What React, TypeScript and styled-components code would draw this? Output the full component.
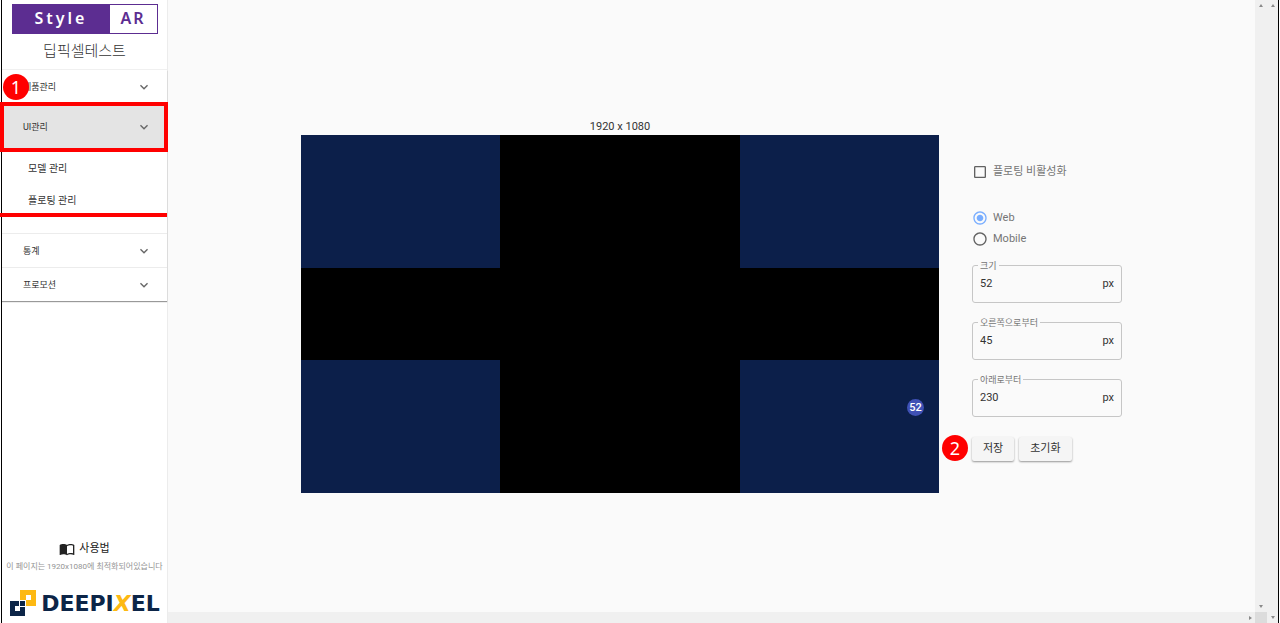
import React, { useState } from "react";
import styled, { createGlobalStyle, css } from "styled-components";
import {
  MdCheckBox,
  MdCheckBoxOutlineBlank,
  MdExpandMore,
  MdImportContacts,
  MdRadioButtonChecked,
  MdRadioButtonUnchecked,
} from "react-icons/md";

const GlobalStyle = createGlobalStyle`
  *, *::before, *::after { box-sizing: border-box; }
  body {
    margin: 0;
    background: #fff;
    color: #333;
    font-family: Roboto, "Noto Sans CJK KR", sans-serif;
    font-size: 11px;
    line-height: 16px;
  }
  button, input { font: inherit; color: inherit; }
`;

const Frame = styled.div`
  display: flex;
  min-height: 100vh;
  margin: 0 1px;
  border-left: 1px solid #000;
  border-right: 1px solid #000;
`;

const Sidebar = styled.aside`
  display: flex;
  flex-direction: column;
  flex: 0 0 166px;
  border-right: 1px solid #ececec;
  background: #fff;
`;

const Brand = styled.header`
  display: flex;
  flex-direction: column;
  align-items: center;
  height: 70px;
  padding-top: 4px;
  border-bottom: 1px solid #f0f0f0;
`;

const StyleLogo = styled.div`
  display: flex;
  width: 146px;
  height: 30px;
  border: 1px solid #5c2d91;
  font-family: "Noto Sans", sans-serif;
  font-size: 16px;
  font-weight: 600;
  line-height: 27px;
  text-align: center;
`;

const LogoStyle = styled.span`
  flex: 0 0 97px;
  background: #5c2d91;
  color: #fff;
  letter-spacing: 3px;
`;

const LogoAr = styled.span`
  flex: 1;
  color: #5c2d91;
  letter-spacing: 2px;
`;

const AccountName = styled.div`
  margin-top: 6px;
  font-size: 15px;
  line-height: 22px;
  font-weight: 300;
`;

const Menu = styled.nav`
  position: relative;
  box-shadow: 0 1px 1px rgba(0, 0, 0, 0.4);
`;

const MenuSection = styled.div`
  position: relative;
  & + & { border-top: 1px solid #ececec; }
`;

const MenuButton = styled.button<{ $active?: boolean }>`
  display: flex;
  align-items: center;
  justify-content: space-between;
  width: 100%;
  height: ${(p) => (p.$active ? "45px" : "33px")};
  padding: 0 15px 0 21px;
  border: 0;
  background: ${(p) => (p.$active ? "#e4e4e4" : "#fff")};
  font-size: 9px;
  cursor: pointer;
  svg { width: 16px; height: 16px; color: #666; }
`;

const SubMenu = styled.div`
  display: flex;
  flex-direction: column;
  padding: 4px 0 16px;
`;

const SubLink = styled.a`
  height: 32px;
  padding-left: 26px;
  color: #333;
  font-size: 10px;
  line-height: 32px;
  text-decoration: none;
`;

const HighlightBox = styled.div`
  position: absolute;
  top: -2px;
  left: -2px;
  right: -1px;
  height: 50px;
  border: 4px solid #f00;
  pointer-events: none;
`;

const HighlightLine = styled.div`
  position: absolute;
  bottom: 16px;
  left: -2px;
  right: 0;
  height: 4px;
  background: #f00;
`;

const StepBadge = styled.span<{ $place: "menu" | "actions" }>`
  position: absolute;
  z-index: 1;
  width: 26px;
  height: 26px;
  border-radius: 50%;
  background: #f00;
  color: #fff;
  font-family: "Noto Sans", sans-serif;
  font-size: 18px;
  line-height: 26px;
  text-align: center;
  ${(p) =>
    p.$place === "menu"
      ? css`top: 4px; left: 1px;`
      : css`top: -2px; left: -30px;`}
`;

const SideFooter = styled.footer`
  display: flex;
  flex-direction: column;
  align-items: center;
  margin-top: auto;
  padding-bottom: 6px;
`;

const GuideLink = styled.a`
  display: flex;
  align-items: center;
  gap: 4px;
  color: #222;
  text-decoration: none;
  svg { width: 16px; height: 16px; }
`;

const Notice = styled.p`
  margin: 3px 0 0;
  color: #949494;
  font-size: 8px;
  line-height: 14px;
  white-space: nowrap;
`;

const Company = styled.div`
  display: flex;
  align-items: flex-end;
  gap: 4px;
  margin-top: 15px;
  color: #0c2547;
  font-family: "DejaVu Sans", sans-serif;
  font-size: 22px;
  font-weight: 700;
  line-height: 26px;
  svg { flex: none; }
  em { color: #fdb913; }
`;

const Main = styled.main`
  display: flex;
  flex: 1;
  flex-direction: column;
  min-width: 0;
  background: #fafafa;
`;

const Workspace = styled.div`
  display: flex;
  flex: 1;
  align-items: center;
  justify-content: center;
  padding: 24px;
`;

const Editor = styled.div`
  display: flex;
  align-items: flex-start;
  gap: 33px;
  flex: 0 1 821px;
`;

const Preview = styled.figure`
  flex: 1;
  margin: 0;
`;

const Resolution = styled.figcaption`
  text-align: center;
`;

const Screen = styled.div`
  position: relative;
  display: grid;
  grid-template-columns: 199fr 240fr 199fr;
  grid-template-rows: 133fr 93fr 133fr;
  aspect-ratio: 16 / 9;
  background: #000;
`;

const Zone = styled.div<{ $open: boolean }>`
  background: ${(p) => (p.$open ? "#0c1f4a" : "#000")};
`;

const FloatingDot = styled.div`
  position: absolute;
  display: flex;
  align-items: center;
  justify-content: center;
  border-radius: 50%;
  background: #3f51b5;
  color: #fff;
  font-weight: 500;
`;

const Controls = styled.form`
  flex: none;
  width: 150px;
  padding-top: 43px;
`;

const Choices = styled.div`
  margin: 25px 0 15px;
`;

const Choice = styled.label`
  position: relative;
  display: flex;
  align-items: center;
  gap: 5px;
  height: 21px;
  color: #757575;
  cursor: pointer;
  input {
    position: absolute;
    width: 16px;
    height: 16px;
    margin: 0;
    opacity: 0;
  }
  svg { width: 16px; height: 16px; color: #616161; }
  input:checked + svg { color: #78adff; }
`;

const Fields = styled.div`
  display: flex;
  flex-direction: column;
  gap: 19px;
`;

const Field = styled.div`
  position: relative;
  display: flex;
  align-items: center;
  height: 38px;
  padding: 0 7px;
  border: 1px solid #c6c6c6;
  border-radius: 3px;
  label {
    position: absolute;
    top: -7px;
    left: 5px;
    padding: 0 2px;
    background: #fafafa;
    color: #757575;
    font-size: 9px;
    line-height: 14px;
  }
  input {
    flex: 1;
    min-width: 0;
    padding: 0;
    border: 0;
    outline: 0;
    background: transparent;
  }
`;

const Actions = styled.div`
  position: relative;
  display: flex;
  gap: 5px;
  margin-top: 20px;
`;

const ActionButton = styled.button`
  height: 24px;
  padding: 0 11px;
  border: 0;
  border-radius: 2px;
  background: #f5f5f5;
  box-shadow: 0 1px 2px rgba(0, 0, 0, 0.4);
  white-space: nowrap;
  cursor: pointer;
`;

const BottomTrack = styled.div`
  display: flex;
  align-items: center;
  justify-content: flex-end;
  height: 11px;
  padding-right: 3px;
  background: #f0f0f0;
`;

const SideTrack = styled.div`
  display: flex;
  flex: 0 0 11px;
  flex-direction: column;
  align-items: center;
  justify-content: space-between;
  padding: 4px 0;
  background: #f0f0f0;
`;

const InnerTrack = styled.div`
  display: flex;
  flex: 0 0 12px;
  flex-direction: column;
`;

const InnerRail = styled(SideTrack)`
  flex: 1;
`;

const Corner = styled.div`
  height: 11px;
  background: #dcdcdc;
`;

const Arrow = styled.i<{ $dir: "up" | "down" | "right" }>`
  width: 0;
  height: 0;
  border: 2px solid transparent;
  ${(p) => p.$dir === "up" && css`border-top: 0; border-bottom: 3px solid #8a8a8a;`}
  ${(p) => p.$dir === "down" && css`border-bottom: 0; border-top: 3px solid #8a8a8a;`}
  ${(p) => p.$dir === "right" && css`border-right: 0; border-left: 3px solid #8a8a8a;`}
`;

const PREVIEW_SCALE = 3;
const OPEN_ZONES = [0, 2, 6, 8];
const DEFAULTS = { size: "52", right: "45", bottom: "230" };
const FIELDS: { key: keyof typeof DEFAULTS; label: string }[] = [
  { key: "size", label: "크기" },
  { key: "right", label: "오른쪽으로부터" },
  { key: "bottom", label: "아래로부터" },
];

const scaled = (value: string) => Math.round((Number(value) || 0) / PREVIEW_SCALE);

export default function App() {
  const [values, setValues] = useState(DEFAULTS);
  const [disabled, setDisabled] = useState(false);
  const [device, setDevice] = useState("Web");

  return (
    <>
      <GlobalStyle />
      <Frame>
        <Sidebar>
          <Brand>
            <StyleLogo>
              <LogoStyle>Style</LogoStyle>
              <LogoAr>AR</LogoAr>
            </StyleLogo>
            <AccountName>딥픽셀테스트</AccountName>
          </Brand>
          <Menu>
            <MenuSection>
              <MenuButton type="button">제품관리<MdExpandMore /></MenuButton>
              <StepBadge $place="menu">1</StepBadge>
            </MenuSection>
            <MenuSection>
              <MenuButton type="button" $active>UI관리<MdExpandMore /></MenuButton>
              <SubMenu>
                <SubLink href="#model">모델 관리</SubLink>
                <SubLink href="#floating">플로팅 관리</SubLink>
              </SubMenu>
              <HighlightBox />
              <HighlightLine />
            </MenuSection>
            <MenuSection>
              <MenuButton type="button">통계<MdExpandMore /></MenuButton>
            </MenuSection>
            <MenuSection>
              <MenuButton type="button">프로모션<MdExpandMore /></MenuButton>
            </MenuSection>
          </Menu>
          <SideFooter>
            <GuideLink href="#guide"><MdImportContacts />사용법</GuideLink>
            <Notice>이 페이지는 1920x1080에 최적화되어있습니다</Notice>
            <Company>
              <svg width="28" height="28" viewBox="0 0 28 28" aria-hidden="true">
                <path fill="#fdb913" fillRule="evenodd" d="M11 1h16v16H17v-6h-6zM17 6v5h5V6z" />
                <path fill="#0c2547" d="M1 12h9v5H6v5h5v-4h5v9H1zM11 12h5v5h-5z" />
              </svg>
              <span>DEEPI<em>X</em>EL</span>
            </Company>
          </SideFooter>
        </Sidebar>

        <Main>
          <Workspace>
            <Editor>
              <Preview>
                <Resolution>1920 x 1080</Resolution>
                <Screen>
                  {Array.from({ length: 9 }, (_, i) => (
                    <Zone key={i} $open={OPEN_ZONES.includes(i)} />
                  ))}
                  {!disabled && (
                    <FloatingDot
                      style={{
                        width: scaled(values.size),
                        height: scaled(values.size),
                        right: scaled(values.right),
                        bottom: scaled(values.bottom),
                      }}
                    >
                      {values.size}
                    </FloatingDot>
                  )}
                </Screen>
              </Preview>
              <Controls onSubmit={(e) => e.preventDefault()}>
                <Choice>
                  <input type="checkbox" checked={disabled} onChange={(e) => setDisabled(e.target.checked)} />
                  {disabled ? <MdCheckBox /> : <MdCheckBoxOutlineBlank />}
                  플로팅 비활성화
                </Choice>
                <Choices role="radiogroup">
                  {["Web", "Mobile"].map((name) => (
                    <Choice key={name}>
                      <input type="radio" name="device" checked={device === name} onChange={() => setDevice(name)} />
                      {device === name ? <MdRadioButtonChecked /> : <MdRadioButtonUnchecked />}
                      {name}
                    </Choice>
                  ))}
                </Choices>
                <Fields>
                  {FIELDS.map(({ key, label }) => (
                    <Field key={key}>
                      <label htmlFor={key}>{label}</label>
                      <input
                        id={key}
                        type="text"
                        value={values[key]}
                        onChange={(e) => setValues({ ...values, [key]: e.target.value })}
                      />
                      <span>px</span>
                    </Field>
                  ))}
                </Fields>
                <Actions>
                  <StepBadge $place="actions">2</StepBadge>
                  <ActionButton type="submit">저장</ActionButton>
                  <ActionButton type="button" onClick={() => setValues(DEFAULTS)}>초기화</ActionButton>
                </Actions>
              </Controls>
            </Editor>
          </Workspace>
          <BottomTrack><Arrow $dir="right" /></BottomTrack>
        </Main>
        <InnerTrack>
          <InnerRail><Arrow $dir="up" /><Arrow $dir="down" /></InnerRail>
          <Corner />
        </InnerTrack>
        <SideTrack><Arrow $dir="up" /><Arrow $dir="down" /></SideTrack>
      </Frame>
    </>
  );
}
